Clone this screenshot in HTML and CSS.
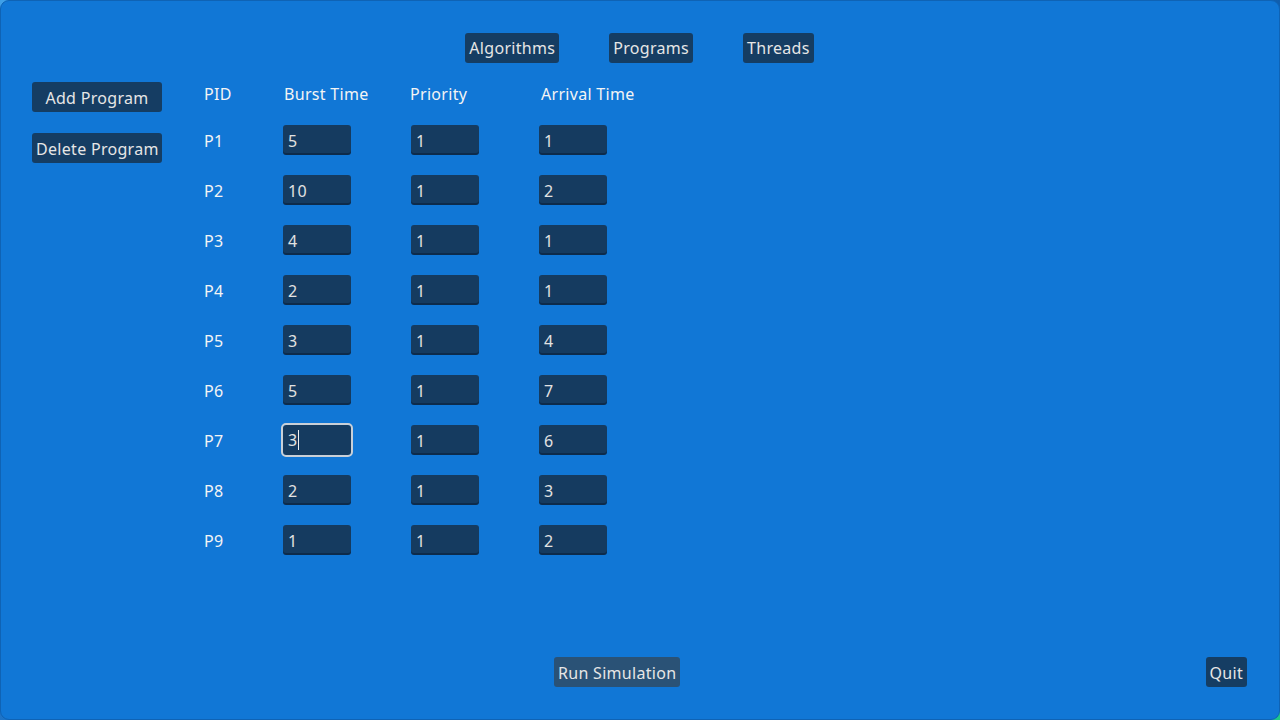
FILE: index.html
```html
<!DOCTYPE html>
<html>
<head>
<meta charset="utf-8">
<link rel="stylesheet" href="styles.css">
</head>
<body>
<div class="window">
  <nav class="tabs">
    <div class="btn">Algorithms</div>
    <div class="btn">Programs</div>
    <div class="btn">Threads</div>
  </nav>
  <main class="content">
    <aside class="side">
      <div class="btn low">Add Program</div>
      <div class="btn low">Delete Program</div>
    </aside>
    <section class="table">
      <div class="head">PID</div>
      <div class="head h-burst">Burst Time</div>
      <div class="head h-prio">Priority</div>
      <div class="head h-arr">Arrival Time</div>

      <div class="pid">P1</div><div class="field">5</div><div class="field">1</div><div class="field">1</div>
      <div class="pid">P2</div><div class="field">10</div><div class="field">1</div><div class="field">2</div>
      <div class="pid">P3</div><div class="field">4</div><div class="field">1</div><div class="field">1</div>
      <div class="pid">P4</div><div class="field">2</div><div class="field">1</div><div class="field">1</div>
      <div class="pid">P5</div><div class="field">3</div><div class="field">1</div><div class="field">4</div>
      <div class="pid">P6</div><div class="field">5</div><div class="field">1</div><div class="field">7</div>
      <div class="pid">P7</div><div class="field focus">3<span class="caret"></span></div><div class="field">1</div><div class="field">6</div>
      <div class="pid">P8</div><div class="field">2</div><div class="field">1</div><div class="field">3</div>
      <div class="pid">P9</div><div class="field">1</div><div class="field">1</div><div class="field">2</div>
    </section>
  </main>
  <footer class="bottom">
    <div class="btn low hover">Run Simulation</div>
    <div class="btn low quit">Quit</div>
  </footer>
</div>
</body>
</html>
```

FILE: styles.css
```css
html, body {
  margin: 0;
  padding: 0;
  width: 1280px;
  height: 720px;
  overflow: hidden;
}
body {
  background: linear-gradient(135deg, #3fa0e8 0%, #1a6fc4 40%, #0e5aa8 70%, #1fc98a 100%);
  font-family: "Noto Sans", "Open Sans", sans-serif;
  font-size: 16px;
  font-weight: 400;
  letter-spacing: 0.3px;
  color: #f2f2f2;
}
.window {
  box-sizing: border-box;
  width: 1280px;
  height: 720px;
  background: #1177d6;
  border: 1px solid #0f63b5;
  border-radius: 9px;
  display: flex;
  flex-direction: column;
}
.btn {
  box-sizing: border-box;
  background: #153d63;
  color: #e6e6e6;
  height: 30px;
  line-height: 30px;
  padding: 0 4px;
  border-radius: 3px;
  white-space: nowrap;
  text-align: center;
}
.btn.low {
  line-height: 29px;
  padding-top: 2px;
}
.btn.hover {
  background: #2a5276;
}
.tabs {
  display: flex;
  justify-content: center;
  gap: 50px;
  padding-top: 32px;
  padding-right: 1px;
}
.content {
  display: flex;
  align-items: flex-start;
  padding-left: 31px;
  margin-top: 19px;
}
.side {
  display: flex;
  flex-direction: column;
  gap: 21px;
  width: 130px;
}
.table {
  display: grid;
  grid-template-columns: 79px 128px 128px 68px;
  grid-template-rows: 26px repeat(9, 30px);
  row-gap: 20px;
  margin-left: 42px;
  margin-top: -3px;
}
.head {
  line-height: 26px;
  padding-top: 2px;
  color: #f4f4f4;
}
.h-burst { padding-left: 1px; }
.h-prio { margin-left: -1px; }
.h-arr { padding-left: 2px; white-space: nowrap; }
.pid {
  line-height: 30px;
  padding-top: 1px;
  color: #f4f4f4;
}
.field {
  box-sizing: border-box;
  width: 68px;
  height: 28px;
  line-height: 30px;
  padding-top: 1px;
  background: #153b60;
  border-radius: 3px;
  box-shadow: 0 2px 0 #0d2b4b;
  padding-left: 5px;
  color: #e2e2e2;
  position: relative;
}
.field.focus {
  outline: 2px solid #c9d0d8;
  outline-offset: 0;
  box-shadow: none;
  height: 30px;
  padding-top: 0;
}
.caret {
  display: inline-block;
  width: 1px;
  height: 20px;
  background: #f0f0f0;
  vertical-align: -4px;
  margin-left: 1px;
}
.bottom {
  margin-top: auto;
  display: flex;
  align-items: center;
  padding-left: 553px;
  padding-right: 32px;
  padding-bottom: 32px;
}
.quit {
  margin-left: auto;
}
```
